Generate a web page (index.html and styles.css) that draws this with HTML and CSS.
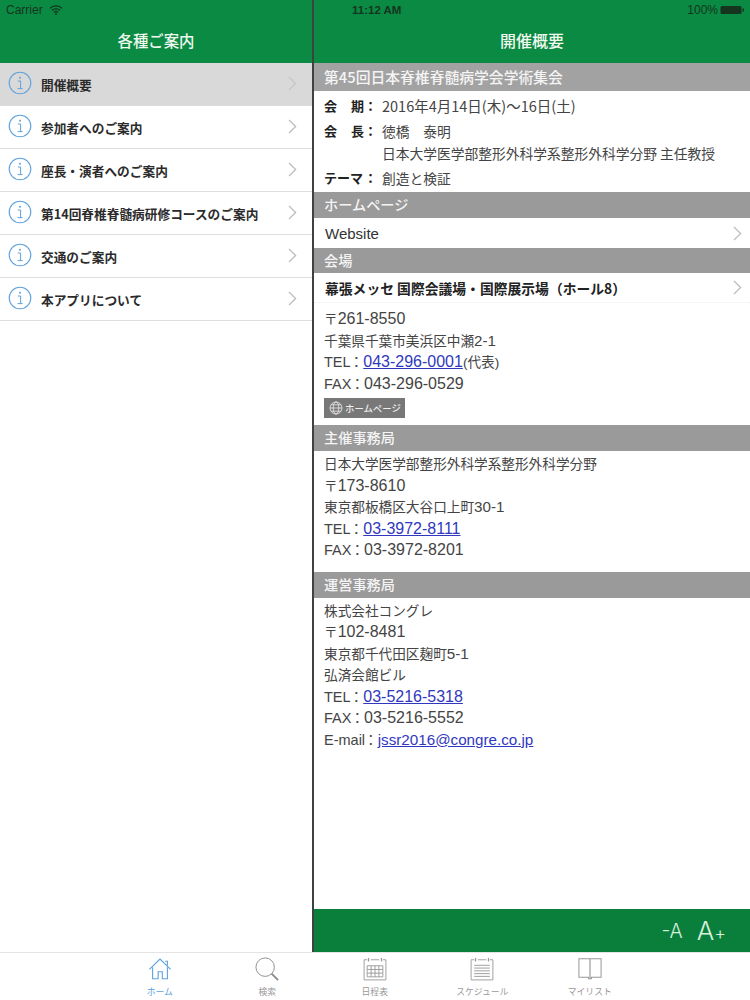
FILE: index.html
```html
<!DOCTYPE html>
<html lang="ja">
<head>
<meta charset="utf-8">
<title>開催概要</title>
<link rel="stylesheet" href="styles.css">
</head>
<body>
<svg class="defs" width="0" height="0">
  <defs>
    <symbol id="info" viewBox="0 0 24 24">
      <circle cx="12" cy="12" r="10.8" fill="none" stroke="#5fa2dc" stroke-width="1.1"/>
      <circle cx="12" cy="6.8" r="1" fill="#5fa2dc"/>
      <path d="M9.800 10h2.800v7.400M9.600 17.600h5" fill="none" stroke="#5fa2dc" stroke-width="1"/>
    </symbol>
    <symbol id="chev" viewBox="0 0 9 15">
      <path d="M1 1l6.600 6.500L1 14" fill="none" stroke="currentColor" stroke-width="1.300"/>
    </symbol>
  </defs>
</svg>
<div class="app">
  <div class="panes">
    <aside class="side">
      <header class="nav">
        <div class="status"><span class="carrier">Carrier</span>
          <svg class="wifi" width="14" height="10" viewBox="0 0 14 10"><path d="M1 3.400a8.600 8.600 0 0 1 12 0M3 5.500a5.700 5.700 0 0 1 8 0M5 7.400a2.900 2.900 0 0 1 4 0" fill="none" stroke="#15351f" stroke-width="1.300"/><circle cx="7" cy="9" r="1" fill="#15351f"/></svg>
        </div>
        <h1 class="nav-title">各種ご案内</h1>
      </header>
      <ul class="menu">
        <li class="menu-item active"><svg class="info"><use href="#info"/></svg><span class="menu-label">開催概要</span><svg class="chev faint"><use href="#chev"/></svg></li>
        <li class="menu-item"><svg class="info"><use href="#info"/></svg><span class="menu-label">参加者へのご案内</span><svg class="chev"><use href="#chev"/></svg></li>
        <li class="menu-item"><svg class="info"><use href="#info"/></svg><span class="menu-label">座長・演者へのご案内</span><svg class="chev"><use href="#chev"/></svg></li>
        <li class="menu-item"><svg class="info"><use href="#info"/></svg><span class="menu-label">第14回脊椎脊髄病研修コースのご案内</span><svg class="chev"><use href="#chev"/></svg></li>
        <li class="menu-item"><svg class="info"><use href="#info"/></svg><span class="menu-label">交通のご案内</span><svg class="chev"><use href="#chev"/></svg></li>
        <li class="menu-item"><svg class="info"><use href="#info"/></svg><span class="menu-label">本アプリについて</span><svg class="chev"><use href="#chev"/></svg></li>
      </ul>
    </aside>
    <main class="detail">
      <header class="nav">
        <div class="status status-right"><span class="time">11:12 AM</span>
          <span class="battery-wrap">100%<svg class="battery" width="25" height="10" viewBox="0 0 25 10"><rect x="0.500" y="1" width="21" height="8" rx="1.500" fill="#15351f"/><rect x="22.500" y="3.500" width="1.500" height="3" fill="#15351f"/></svg></span>
        </div>
        <h1 class="nav-title">開催概要</h1>
      </header>
      <div class="content">
        <h2 class="bar bar-first">第45回日本脊椎脊髄病学会学術集会</h2>
        <dl class="meta">
          <div class="meta-row"><dt class="term-split"><span>会</span><span>期</span></dt><dd class="date">2016年4月14日(木)〜16日(土)</dd></div>
          <div class="meta-row"><dt class="term-split"><span>会</span><span>長</span></dt><dd>徳橋　泰明<br>日本大学医学部整形外科学系整形外科学分野 主任教授</dd></div>
          <div class="meta-row"><dt>テーマ</dt><dd>創造と検証</dd></div>
        </dl>
        <h2 class="bar">ホームページ</h2>
        <div class="link-row"><span>Website</span><svg class="chev"><use href="#chev"/></svg></div>
        <h2 class="bar bar-venue">会場</h2>
        <div class="link-row venue"><span>幕張メッセ 国際会議場・国際展示場（ホール8）</span><svg class="chev"><use href="#chev"/></svg></div>
        <div class="block block-venue">
          <p>〒<span class="lat">261-8550</span></p>
          <p>千葉県千葉市美浜区中瀬<span class="num">2-1</span></p>
          <p><span class="tag">TEL</span>：<a class="lat" href="#">043-296-0001</a>(代表)</p>
          <p><span class="tag">FAX</span>：<span class="lat">043-296-0529</span></p>
          <span class="hp-btn"><svg width="14" height="14" viewBox="0 0 14 14" fill="none" stroke="#eee" stroke-width=".8"><circle cx="7" cy="7" r="6"/><ellipse cx="7" cy="7" rx="2.800" ry="6"/><path d="M1 7h12M2 3.800h10M2 10.200h10"/></svg>ホームページ</span>
        </div>
        <h2 class="bar">主催事務局</h2>
        <div class="block block-host">
          <p>日本大学医学部整形外科学系整形外科学分野</p>
          <p>〒<span class="lat">173-8610</span></p>
          <p>東京都板橋区大谷口上町<span class="num">30-1</span></p>
          <p><span class="tag">TEL</span>：<a class="lat" href="#">03-3972-8111</a></p>
          <p><span class="tag">FAX</span>：<span class="lat">03-3972-8201</span></p>
        </div>
        <h2 class="bar">運営事務局</h2>
        <div class="block block-ops">
          <p>株式会社コングレ</p>
          <p>〒<span class="lat">102-8481</span></p>
          <p>東京都千代田区麹町<span class="num">5-1</span></p>
          <p>弘済会館ビル</p>
          <p><span class="tag">TEL</span>：<a class="lat" href="#">03-5216-5318</a></p>
          <p><span class="tag">FAX</span>：<span class="lat">03-5216-5552</span></p>
          <p><span class="tag">E-mail</span>：<a class="num" href="#">jssr2016@congre.co.jp</a></p>
        </div>
      </div>
      <footer class="fontbar"><span class="font-dec">-A</span><span class="font-inc">A<small>+</small></span></footer>
    </main>
  </div>
  <nav class="tabs">
    <div class="tab tab-on">
      <svg width="24" height="24" viewBox="0 0 26 26" fill="none" stroke="#5fa2dc" stroke-width="1.200"><path d="M1.500 13.500L13 2.200l11.500 11.300M18.500 4.600h2.600v4.400"/><path d="M5 11v12.500h6v-7.500h4.500v7.500H21V11"/></svg>
      <span>ホーム</span>
    </div>
    <div class="tab">
      <svg width="24" height="24" viewBox="0 0 26 26" fill="none" stroke="#8a8a8a"><circle cx="11" cy="11" r="10" stroke-width="1"/><path d="M18 18l7 7" stroke-width="2"/></svg>
      <span>検索</span>
    </div>
    <div class="tab">
      <svg width="24" height="24" viewBox="0 0 26 26" fill="none" stroke="#999" stroke-width="1"><path d="M4.500 3H1.200v21.800h23.600V3h-3.300M8.500 3h9"/><path d="M6 1v4M20 1v4" stroke-width="1.400"/><path d="M4.500 9.500h17v12h-17zM4.500 13.500h17M4.500 17.500h17M8.800 9.500v12M13 9.500v12M17.200 9.500v12"/></svg>
      <span>日程表</span>
    </div>
    <div class="tab">
      <svg width="24" height="24" viewBox="0 0 26 26" fill="none" stroke="#999" stroke-width="1"><path d="M4.500 3H1.200v21.800h23.600V3h-3.300M8.500 3h9"/><path d="M6 1v4M20 1v4" stroke-width="1.400"/><path d="M4.500 9h17M4.500 12h17M4.500 15h17M4.500 18h17M4.500 21h17"/></svg>
      <span>スケジュール</span>
    </div>
    <div class="tab">
      <svg width="24" height="24" viewBox="0 0 26 26" fill="none" stroke="#999" stroke-width="1.100"><path d="M1 2h24v20H14.500v1.500h-3V22H1z"/><path d="M13 2v21.500" stroke-width="1.300"/></svg>
      <span>マイリスト</span>
    </div>
  </nav>
</div>
</body>
</html>
```
FILE: styles.css
```css
* { box-sizing: border-box; }
html, body { margin: 0; padding: 0; }
body {
  width: 750px;
  height: 1000px;
  overflow: hidden;
  background: #fff;
  color: #333;
  font-family: "Noto Sans CJK JP", "Liberation Sans", sans-serif;
}
.defs { display: block; height: 0; }
.app { display: flex; flex-direction: column; height: 1000px; }
.panes { display: flex; height: 952px; }

.side { width: 312px; flex: none; display: flex; flex-direction: column; }
.detail {
  flex: 1;
  display: flex;
  flex-direction: column;
  border-left: 2px solid #3f4340;
  min-width: 0;
}

.nav { height: 63px; flex: none; background: #0a8a42; color: #fff; display: flex; flex-direction: column; }
.status {
  height: 20px;
  display: flex;
  align-items: center;
  gap: 6px;
  padding: 0 6px;
  font: 12px/20px "Liberation Sans", sans-serif;
  color: #15351f;
}
.status-right { justify-content: space-between; padding: 0 5px 0 38px; }
.time { font-weight: 700; font-size: 11.5px; }
.battery-wrap { display: flex; align-items: center; gap: 2px; }
.nav-title {
  margin: 0;
  height: 43px;
  font-size: 16px;
  font-weight: 500;
  line-height: 41px;
  text-align: center;
  color: #f0f8f0;
}
.side .nav-title { font-size: 15.4px; }

.menu { list-style: none; margin: 0; padding: 0; }
.menu-item {
  height: 43px;
  display: flex;
  align-items: center;
  padding: 0 15px 0 8px;
  background: #fff;
  border-bottom: 1px solid #dedede;
}
.menu-item.active { background: #d9d9d9; border-bottom-color: #d9d9d9; }
.info { width: 24px; height: 24px; flex: none; margin: -3px 9px 0 0; }
.menu-label { flex: 1; font-size: 12.7px; font-weight: 700; color: #2b2b2b; line-height: 1; padding-top: 3px; }
.chev { width: 9px; height: 15px; flex: none; color: #bdbdbd; margin-top: -2px; }
.chev.faint { color: #c6c6c6; }

.content { flex: 1; min-height: 0; }
.bar {
  margin: 0;
  height: 26px;
  padding-left: 10px;
  background: #9a9a9a;
  color: #f4f4f4;
  font-size: 14.2px;
  font-weight: 500;
  line-height: 25px;
}
.bar-first { height: 28px; line-height: 27px; font-size: 14.8px; background: #a2a2a2; }
.bar-venue { margin-top: 1px; height: 25px; }

.meta { margin: 0; padding: 4px 0 3px 10px; }
.meta-row { display: flex; margin-bottom: 3px; }
.meta-row:last-child { margin-bottom: 0; }
.meta dt {
  width: 58px;
  flex: none;
  position: relative;
  padding-right: 18px;
  font-size: 13px;
  font-weight: 700;
  line-height: 22px;
  color: #222;
}
.meta dt::after { content: "："; position: absolute; left: 40px; top: 0; }
.meta .term-split { display: flex; justify-content: space-between; }
.meta dd { margin: 0; font-size: 13.75px; line-height: 22px; color: #444; }
.meta .date { font-size: 14.5px; }

.link-row {
  height: 29px;
  display: flex;
  align-items: center;
  justify-content: space-between;
  padding: 1px 8px 0 11px;
  font: 15px "Liberation Sans", "Noto Sans CJK JP", sans-serif;
  color: #333;
}
.link-row .chev { margin-top: 0; }
.venue { height: 30px; padding-top: 0; font: 700 13.8px "Noto Sans CJK JP", sans-serif; color: #222; border-bottom: 1px dotted #eee; }

.block { padding-left: 10px; }
.block p { margin: 0; height: 21.5px; font: 13.65px/21.5px "Liberation Sans", "Noto Sans CJK JP", sans-serif; color: #444; }
.block a { color: #3038c0; text-decoration: underline; }
.block .lat { font-size: 16px; line-height: 1; }
.block .num { font-size: 15.2px; line-height: 1; }
.block .tag { font-size: 14.5px; line-height: 1; margin-right: -1px; }
.block-venue { padding-top: 6px; padding-bottom: 6px; }
.block-host { padding-top: 3px; padding-bottom: 10px; }
.block-ops { padding-top: 3px; }
.hp-btn {
  display: inline-flex;
  align-items: center;
  gap: 2px;
  height: 20px;
  width: 81px;
  margin-top: 3px;
  padding-left: 5px;
  background: #787878;
  color: #eee;
  font-size: 9.400px;
  font-weight: 500;
  vertical-align: top;
  white-space: nowrap;
}

.fontbar {
  height: 43px;
  flex: none;
  background: #0a7f3c;
  color: #d8f0dc;
  display: flex;
  align-items: center;
  justify-content: flex-end;
  gap: 14px;
  padding-right: 24px;
  font-family: Inter, "Liberation Sans", sans-serif;
  font-weight: 300;
}
.font-dec { font-size: 19.500px; }
.font-inc { font-size: 26px; }
.font-inc small { font-size: 18px; }

.tabs {
  height: 48px;
  flex: none;
  display: flex;
  padding-left: 106px;
  border-top: 1px solid #e3e3e3;
  background: #fff;
}
.tab {
  width: 107.500px;
  display: flex;
  flex-direction: column;
  align-items: center;
  padding-top: 4px;
  font-size: 8.800px;
  color: #9a9a9a;
}
.tab svg { flex: none; }
.tab span { line-height: 12px; margin-top: 5px; }
.tab-on { color: #5fa2dc; }
```
